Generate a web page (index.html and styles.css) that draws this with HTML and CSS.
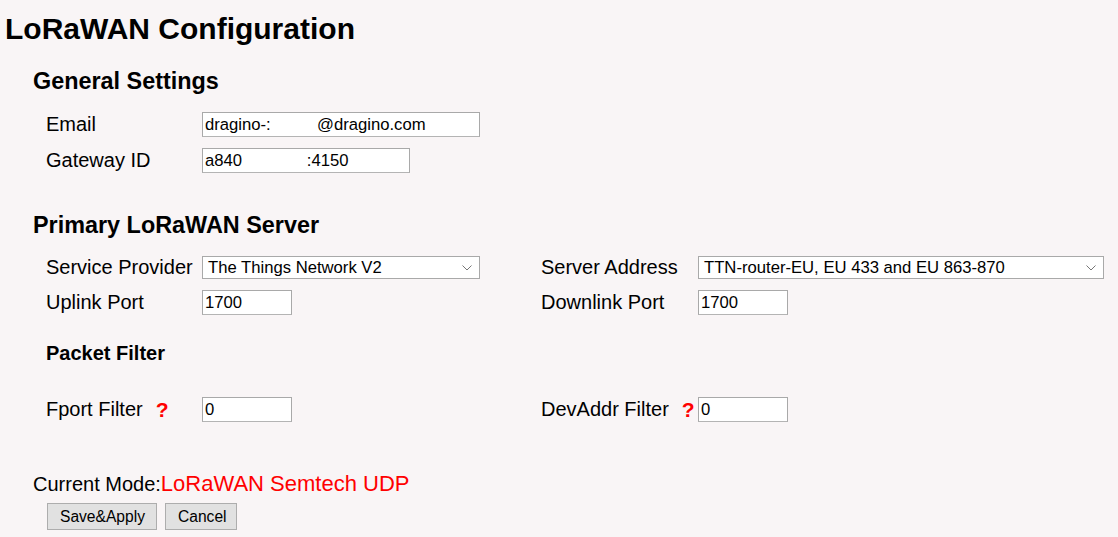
FILE: index.html
```html
<!DOCTYPE html>
<html>
<head>
<meta charset="utf-8">
<link rel="stylesheet" href="styles.css">
</head>
<body>
<h1 class="title">LoRaWAN Configuration</h1>

<h2 class="section section-general">General Settings</h2>
<div class="row row-email">
  <label class="lbl">Email</label>
  <input class="txt w-email" type="text" value="dragino-:          @dragino.com">
</div>
<div class="row row-gw">
  <label class="lbl">Gateway ID</label>
  <input class="txt w-gw" type="text" value="a840              :4150">
</div>

<h2 class="section section-server">Primary LoRaWAN Server</h2>
<div class="row row-select">
  <label class="lbl">Service Provider</label>
  <div class="field">
    <span class="sel sel-left">The Things Network V2
      <svg class="chev" width="10" height="6" viewBox="0 0 10 6"><path d="M0.5 0.5 L5 5 L9.5 0.5" fill="none" stroke="#777" stroke-width="1"/></svg>
    </span>
  </div>
  <label class="lbl lbl-right">Server Address</label>
  <span class="sel sel-right">TTN-router-EU, EU 433 and EU 863-870
    <svg class="chev" width="10" height="6" viewBox="0 0 10 6"><path d="M0.5 0.5 L5 5 L9.5 0.5" fill="none" stroke="#777" stroke-width="1"/></svg>
  </span>
</div>
<div class="row row-port">
  <label class="lbl">Uplink Port</label>
  <div class="field"><input class="txt w-port" type="text" value="1700"></div>
  <label class="lbl lbl-right">Downlink Port</label>
  <input class="txt w-port" type="text" value="1700">
</div>

<h3 class="sub">Packet Filter</h3>
<div class="row row-filter">
  <label class="lbl">Fport Filter<span class="help">?</span></label>
  <div class="field"><input class="txt w-port" type="text" value="0"></div>
  <label class="lbl lbl-right">DevAddr Filter<span class="help">?</span></label>
  <input class="txt w-port" type="text" value="0">
</div>

<p class="mode">Current Mode:<span class="mode-val">LoRaWAN Semtech UDP</span></p>
<div class="actions">
  <button class="btn btn-save">Save&amp;Apply</button>
  <button class="btn btn-cancel">Cancel</button>
</div>
</body>
</html>
```

FILE: styles.css
```css
html, body {
  margin: 0;
  padding: 0;
  background: #f9f5f6;
}
body {
  font-family: "Liberation Sans", Arial, sans-serif;
  color: #000;
  width: 1118px;
  height: 537px;
  overflow: hidden;
}
.title {
  font-size: 30px;
  line-height: 35px;
  font-weight: bold;
  margin: 11px 0 0 5px;
}
.section {
  font-size: 23.4px;
  line-height: 27px;
  font-weight: bold;
  margin: 0 0 0 33px;
}
.section-general { margin-top: 22px; }
.section-server { margin-top: 39px; }

.row {
  display: flex;
  align-items: center;
  height: 25px;
  margin-left: 46px;
}
.row-email { margin-top: 17px; }
.row-gw { margin-top: 11px; }
.row-select { margin-top: 16px; }
.row-port { margin-top: 10px; }
.row-filter { margin-top: 32px; }

.lbl {
  display: flex;
  align-items: center;
  width: 156px;
  flex: none;
  font-size: 20px;
  line-height: 23px;
}
.lbl-right { width: 157px; }
.field {
  width: 339px;
  flex: none;
  display: flex;
  align-items: center;
}
.help {
  color: #ff0000;
  font-weight: bold;
  font-size: 21px;
  margin-left: 13px;
}

.txt {
  box-sizing: border-box;
  height: 25px;
  border: 1px solid #a9a9a9;
  border-bottom-color: #b4b4b4;
  background: #fff;
  font-family: "Liberation Sans", Arial, sans-serif;
  font-size: 16.67px;
  color: #000;
  padding: 0 2px;
  margin: 0;
  outline: none;
}
.w-email { width: 278px; }
.w-gw { width: 208px; }
.w-port { width: 90px; }

.sel {
  position: relative;
  box-sizing: border-box;
  display: flex;
  align-items: center;
  height: 23px;
  border: 1px solid #a9a9a9;
  background: #fff;
  font-size: 16.67px;
  padding: 0 5px;
  white-space: nowrap;
}
.sel-left { width: 278px; }
.sel-right { width: 406px; }
.chev {
  position: absolute;
  right: 7px;
  top: 8px;
}

.sub {
  font-size: 20px;
  line-height: 23px;
  font-weight: bold;
  margin: 27px 0 0 46px;
}

.mode {
  font-size: 20px;
  line-height: 23px;
  margin: 50px 0 0 33px;
}
.mode-val {
  color: #ff0000;
  font-size: 22px;
}

.actions {
  display: flex;
  gap: 8px;
  margin: 7px 0 0 47px;
}
.btn {
  box-sizing: border-box;
  height: 27px;
  padding: 0 12px;
  border: 1px solid #adadad;
  background: #e1e1e1;
  font-family: "Liberation Sans", Arial, sans-serif;
  font-size: 15.6px;
  color: #000;
  margin: 0;
}
.btn-save { width: 110px; }
.btn-cancel { width: 72px; }
```
